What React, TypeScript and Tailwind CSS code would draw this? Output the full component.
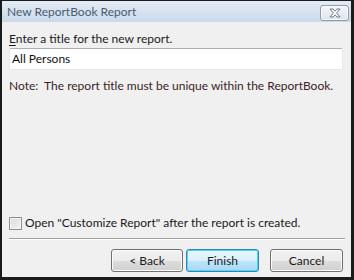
import React from "react";

export default function App() {
  const font = { fontFamily: 'Lato, "Noto Sans", sans-serif' };
  return (
    <div
      className="w-[354px] h-[280px] bg-[#1b1b1b] pl-[2px] pr-[3px] pb-[3px] pt-[1px] flex flex-col"
      style={font}
    >
      {/* Title bar */}
      <div className="h-[21px] flex items-center justify-between bg-gradient-to-b from-[#e3ebf5] to-[#cad9eb] pl-[5px] pr-[2px]">
        <span className="text-[12px] leading-[16px] text-[#4b5b6e]">New ReportBook Report</span>
        <div className="w-[29px] h-[16px] mt-[2px] rounded-[3px] border border-[#8f9cab] bg-gradient-to-b from-[#f4f6f9] to-[#dde4ec] flex items-center justify-center shadow-[inset_0_0_0_1px_rgba(255,255,255,0.7)]">
          <svg width="14" height="10" viewBox="0 0 14 10">
            <path
              d="M2 1 H5 L7 3.2 L9 1 H12 L8.6 5 L12 9 H9 L7 6.8 L5 9 H2 L5.4 5 Z"
              fill="#ffffff"
              stroke="#6f7b89"
              strokeWidth="1"
              strokeLinejoin="round"
            />
          </svg>
        </div>
      </div>
      {/* Body */}
      <div className="flex-1 bg-[#f0f0f0] flex flex-col px-[7px]">
        <div className="mt-[9px] text-[12px] leading-[16px] text-[#1a1a1a]">
          <span className="underline underline-offset-[2px]">E</span>nter a title for the new report.
        </div>
        <div className="mt-[1px] h-[22px] w-[334px] bg-white border border-[#e3e9ef] border-t-[#abadb3] rounded-[2px] flex items-center pl-[2px] text-[12px] text-[#111]">
          All Persons
        </div>
        <div className="mt-[8px] text-[12px] leading-[16px] text-[#3a1f24] whitespace-pre">
          Note:  The report title must be unique within the ReportBook.
        </div>
        <div className="flex-1" />
        <label className="flex items-center gap-[3px] text-[12px] leading-[16px] text-[#1a1a1a]">
          <span className="w-[13px] h-[13px] border border-[#8e8f8f] bg-gradient-to-br from-[#dcdcdc] to-[#f4f4f4] shadow-[inset_0_0_0_1px_#f4f4f4]" />
          <span>Open "Customize Report" after the report is created.</span>
        </label>
        <div className="mt-[7px] h-[2px] w-[336px] border-t border-[#a0a0a0] border-b border-b-white" />
        <div className="mt-[9px] mb-[5px] flex justify-end pr-[1px] text-[12px] text-[#1a1a1a]">
          <button className="w-[72px] h-[23px] rounded-[3px] border border-[#707070] bg-[linear-gradient(#f2f2f2_0%,#ebebeb_50%,#dddddd_50%,#cfcfcf_100%)] shadow-[inset_0_0_0_1px_#fcfcfc]">
            &lt; Back
          </button>
          <button className="ml-[3px] w-[73px] h-[23px] rounded-[3px] border border-[#3c7fb1] bg-[linear-gradient(#eaf6fd_0%,#d9f0fc_50%,#bee6fd_50%,#a7d9f5_100%)] shadow-[inset_0_0_0_1px_#48d8fb]">
            Finish
          </button>
          <button className="ml-[11px] w-[73px] h-[23px] rounded-[3px] border border-[#707070] bg-[linear-gradient(#f2f2f2_0%,#ebebeb_50%,#dddddd_50%,#cfcfcf_100%)] shadow-[inset_0_0_0_1px_#fcfcfc]">
            Cancel
          </button>
        </div>
      </div>
    </div>
  );
}
